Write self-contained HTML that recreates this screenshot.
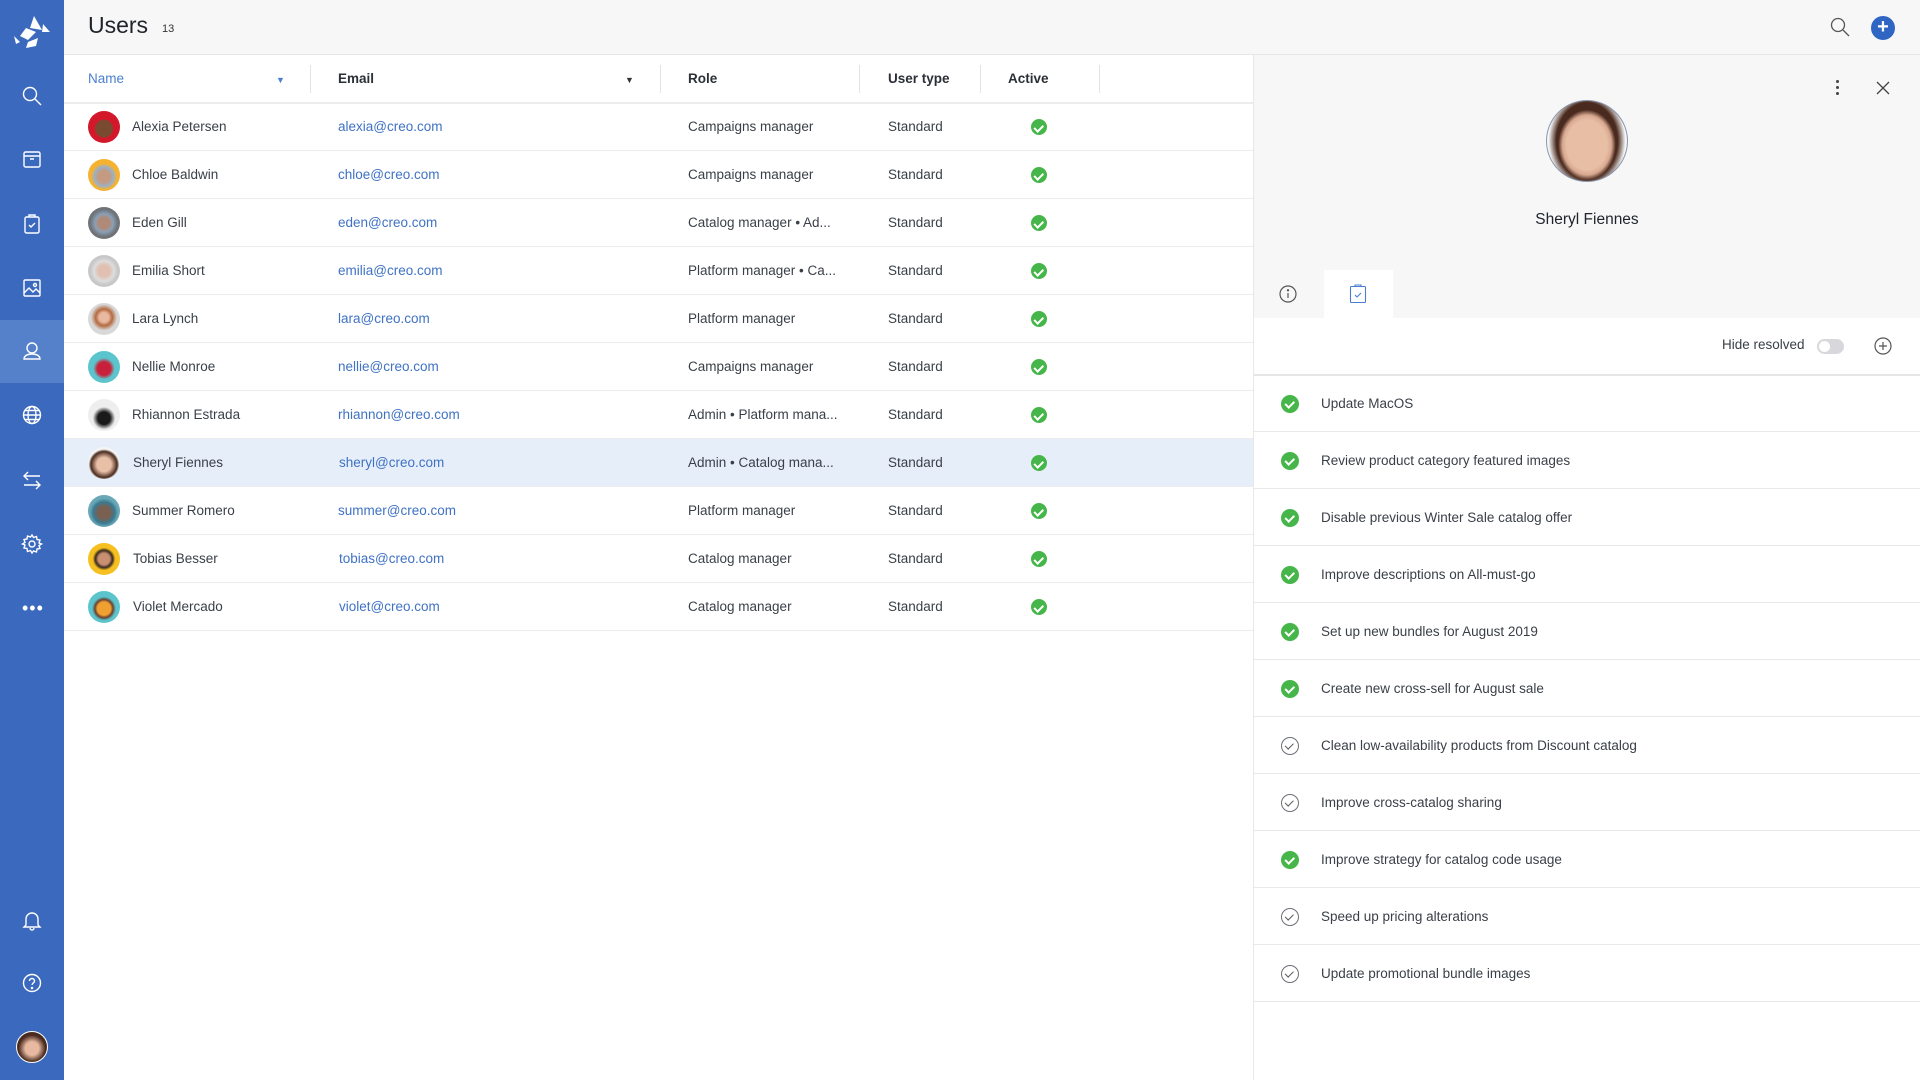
<!DOCTYPE html>
<html><head><meta charset="utf-8"><style>
*{margin:0;padding:0;box-sizing:border-box}
body{width:1920px;height:1080px;overflow:hidden;background:#fff;font-family:"Liberation Sans",sans-serif;color:#2e3440;position:relative}
.abs{position:absolute}
#side{left:0;top:0;width:64px;height:1080px;background:#3b69be}
.si{position:absolute;left:20px;width:24px;height:24px}
#top{left:64px;top:0;width:1856px;height:55px;background:#f7f7f7;border-bottom:1px solid #e6e6e6}
.hd{position:absolute;top:55px;height:48px;line-height:48px;font-size:13.5px;font-weight:bold;color:#2b2f36}
.sep{position:absolute;top:65px;width:1px;height:28px;background:#e3e3e3}
.row{position:absolute;left:64px;width:1189px;height:48px;border-bottom:1.5px solid #ececec;font-size:13.5px;color:#3a3f47}
.row.sel{background:#e6eef9}
.row span{position:absolute;top:0;line-height:48px;white-space:nowrap}
.av{position:absolute;left:24px;top:8px;width:32px;height:32px;border-radius:50%}
.em{color:#3f72c4}
.ok{position:absolute;left:967px;top:16px;width:16px;height:16px;border-radius:50%;background:#47b64a}
.ok:after,.tk.g:after{content:"";position:absolute;left:5px;top:3.5px;width:3.5px;height:6.5px;border:solid #fff;border-width:0 2px 2px 0;transform:rotate(45deg)}
#rp{left:1253px;top:55px;width:667px;height:1025px;background:#fff;border-left:1px solid #e8e8e8}
#rtop{left:1254px;top:55px;width:666px;height:263px;background:#f7f7f7}
.task{position:absolute;left:1254px;width:666px;height:57px;border-bottom:1.5px solid #e8e8e8;font-size:13.5px;color:#3a3f47}
.task span{position:absolute;left:67px;line-height:57px}
.tk{position:absolute;left:27px;top:20px;width:18px;height:18px;border-radius:50%}
.tk.g{background:#47b64a}
.tk.g:after{left:6px;top:4px}
.tk.o{border:1.3px solid #6b6f76}
.tk.o:after{content:"";position:absolute;left:5px;top:3px;width:3.5px;height:6.5px;border:solid #555;border-width:0 1.6px 1.6px 0;transform:rotate(45deg)}
</style></head><body>
<div id="side" class="abs">
<svg class="abs" style="left:12px;top:14px" width="40" height="36" viewBox="0 0 40 36"><g fill="#fff"><polygon points="22,2 30,16 18,14"/><polygon points="31,10 38,18 30,18"/><polygon points="14,14 24,18 16,26 8,22"/><polygon points="2,22 8,28 4,30"/><polygon points="16,28 26,24 24,32 14,34"/></g></svg>
<svg class="si" style="top:84px" viewBox="0 0 24 24" fill="none" stroke="#fff" stroke-width="1.4"><circle cx="10" cy="10" r="6.5"/><path d="M15 15l6 6"/></svg>
<svg class="si" style="top:147px" viewBox="0 0 24 24" fill="none" stroke="#fff" stroke-width="1.4"><rect x="4" y="5" width="16" height="15" rx="1.5"/><path d="M4 9h16M10 12h4"/></svg>
<svg class="si" style="top:212px" viewBox="0 0 24 24" fill="none" stroke="#fff" stroke-width="1.4"><rect x="5" y="5" width="14" height="16" rx="1.5"/><path d="M9 5V3h6v2M9 13l2 2 4-4"/></svg>
<svg class="si" style="top:276px" viewBox="0 0 24 24" fill="none" stroke="#fff" stroke-width="1.4"><rect x="4" y="4" width="16" height="16" rx="1"/><path d="M4 17l5-5 4 4 3-3 4 4"/><circle cx="15" cy="9" r="1.5"/></svg>
<div class="abs" style="left:0;top:320px;width:64px;height:63px;background:#5581cb"></div>
<svg class="si" style="top:339px" viewBox="0 0 24 24" fill="none" stroke="#fff" stroke-width="1.4"><circle cx="12" cy="9" r="5"/><path d="M4 20c0-3 3-5 8-5s8 2 8 5z"/></svg>
<svg class="si" style="top:403px" viewBox="0 0 24 24" fill="none" stroke="#fff" stroke-width="1.4"><circle cx="12" cy="12" r="8.5"/><ellipse cx="12" cy="12" rx="4" ry="8.5"/><path d="M3.5 12h17M5 7.5h14M5 16.5h14"/></svg>
<svg class="si" style="top:468px" viewBox="0 0 24 24" fill="none" stroke="#fff" stroke-width="1.4"><path d="M20 8H4M8 4L4 8l4 4M4 17h16M16 13l4 4-4 4"/></svg>
<svg class="si" style="top:532px" viewBox="0 0 24 24" fill="none" stroke="#fff" stroke-width="1.4"><circle cx="12" cy="12" r="3"/><path d="M12 3l1.5 2.5 3-1 .5 3 3 .5-1 3L21.5 12l-2.5 1.5 1 3-3 .5-.5 3-3-1L12 21l-1.5-2.5-3 1-.5-3-3-.5 1-3L2.5 12 5 10.5l-1-3 3-.5.5-3 3 1z"/></svg>
<div class="abs" style="left:22px;top:606px;color:#fff;font-size:18px;letter-spacing:1px;line-height:4px">•••</div>
<svg class="si" style="top:908px" viewBox="0 0 24 24" fill="none" stroke="#fff" stroke-width="1.4"><path d="M6 17V11a6 6 0 0112 0v6l2 2H4zM10 20a2 2 0 004 0"/></svg>
<svg class="si" style="top:971px" viewBox="0 0 24 24" fill="none" stroke="#fff" stroke-width="1.4"><circle cx="12" cy="12" r="8.5"/><path d="M9.5 10a2.5 2.5 0 115 0c0 2-2.5 2-2.5 4"/><circle cx="12" cy="17" r=".6" fill="#fff"/></svg>
<div class="abs" style="left:16px;top:1031px;width:32px;height:32px;border-radius:50%;background:radial-gradient(circle at 50% 55%,#e8b9a0 30%,#4a2b20 60%);border:1px solid #fff"></div>
</div>
<div id="top" class="abs">
<div class="abs" style="left:24px;top:12px;font-size:23px;color:#1f232a">Users</div>
<div class="abs" style="left:98px;top:23px;font-size:11px;color:#333">13</div>
<svg class="abs" style="left:1766px;top:17px" width="20" height="20" viewBox="0 0 20 20" fill="none" stroke="#555" stroke-width="1.3"><circle cx="8" cy="8" r="6.5"/><path d="M13 13l6 6"/></svg>
<div class="abs" style="left:1807px;top:16px;width:24px;height:24px;border-radius:50%;background:#2f66c4;color:#fff;font-size:20px;line-height:23px;text-align:center;font-weight:bold">+</div>
</div>
<div class="hd" style="left:88px;color:#4a7fd0;font-weight:normal">Name</div>
<div class="abs" style="left:276px;top:75px;font-size:9px;color:#4a7fd0">▼</div>
<div class="sep" style="left:310px"></div>
<div class="hd" style="left:338px">Email</div>
<div class="abs" style="left:625px;top:75px;font-size:9px;color:#333">▼</div>
<div class="sep" style="left:660px"></div>
<div class="hd" style="left:688px">Role</div>
<div class="sep" style="left:859px"></div>
<div class="hd" style="left:888px">User type</div>
<div class="sep" style="left:980px"></div>
<div class="hd" style="left:1008px">Active</div>
<div class="sep" style="left:1099px"></div>
<div class="abs" style="left:64px;top:102px;width:1189px;height:1.5px;background:#ececec"></div>

<div class="row" style="top:103px"><div class="av" style="background:radial-gradient(circle at 50% 55%,#7a4a30 35%,#d4182c 40%)"></div><span style="left:68px">Alexia Petersen</span><span class="em" style="left:274px">alexia@creo.com</span><span style="left:624px">Campaigns manager</span><span style="left:824px">Standard</span><div class="ok"></div></div>
<div class="row" style="top:151px"><div class="av" style="background:radial-gradient(circle at 50% 55%,#c49a80 25%,#9ab0c8 40%,#f5b230 55%)"></div><span style="left:68px">Chloe Baldwin</span><span class="em" style="left:274px">chloe@creo.com</span><span style="left:624px">Campaigns manager</span><span style="left:824px">Standard</span><div class="ok"></div></div>
<div class="row" style="top:199px"><div class="av" style="background:radial-gradient(circle at 50% 50%,#b08a78 25%,#8aa0b8 40%,#707478 60%)"></div><span style="left:68px">Eden Gill</span><span class="em" style="left:274px">eden@creo.com</span><span style="left:624px">Catalog manager • Ad...</span><span style="left:824px">Standard</span><div class="ok"></div></div>
<div class="row" style="top:247px"><div class="av" style="background:radial-gradient(circle at 50% 50%,#e0c0b0 25%,#ddd 45%,#c8c8c8 60%)"></div><span style="left:68px">Emilia Short</span><span class="em" style="left:274px">emilia@creo.com</span><span style="left:624px">Platform manager • Ca...</span><span style="left:824px">Standard</span><div class="ok"></div></div>
<div class="row" style="top:295px"><div class="av" style="background:radial-gradient(circle at 50% 45%,#e8b8a0 20%,#b46a40 35%,#d8d8d8 55%)"></div><span style="left:68px">Lara Lynch</span><span class="em" style="left:274px">lara@creo.com</span><span style="left:624px">Platform manager</span><span style="left:824px">Standard</span><div class="ok"></div></div>
<div class="row" style="top:343px"><div class="av" style="background:radial-gradient(circle at 50% 55%,#c8203a 28%,#5cc4cc 45%)"></div><span style="left:68px">Nellie Monroe</span><span class="em" style="left:274px">nellie@creo.com</span><span style="left:624px">Campaigns manager</span><span style="left:824px">Standard</span><div class="ok"></div></div>
<div class="row" style="top:391px"><div class="av" style="background:radial-gradient(circle at 50% 60%,#1a1a1a 25%,#eee 45%)"></div><span style="left:68px">Rhiannon Estrada</span><span class="em" style="left:274px">rhiannon@creo.com</span><span style="left:624px">Admin • Platform mana...</span><span style="left:824px">Standard</span><div class="ok"></div></div>
<div class="row sel" style="top:439px"><div class="av" style="background:radial-gradient(circle at 50% 55%,#e8c0a8 30%,#4a2b20 55%,#f5f5f5 65%)"></div><span style="left:69px">Sheryl Fiennes</span><span class="em" style="left:275px">sheryl@creo.com</span><span style="left:624px">Admin • Catalog mana...</span><span style="left:824px">Standard</span><div class="ok"></div></div>
<div class="row" style="top:487px"><div class="av" style="background:radial-gradient(circle at 50% 55%,#7a6050 25%,#3a7a90 45%,#6aa8b8 60%)"></div><span style="left:68px">Summer Romero</span><span class="em" style="left:274px">summer@creo.com</span><span style="left:624px">Platform manager</span><span style="left:824px">Standard</span><div class="ok"></div></div>
<div class="row" style="top:535px"><div class="av" style="background:radial-gradient(circle at 50% 50%,#c89070 25%,#3a2a20 38%,#f5c020 50%)"></div><span style="left:69px">Tobias Besser</span><span class="em" style="left:275px">tobias@creo.com</span><span style="left:624px">Catalog manager</span><span style="left:824px">Standard</span><div class="ok"></div></div>
<div class="row" style="top:583px"><div class="av" style="background:radial-gradient(circle at 50% 55%,#f0a030 28%,#6a4030 38%,#5cc4cc 50%)"></div><span style="left:69px">Violet Mercado</span><span class="em" style="left:275px">violet@creo.com</span><span style="left:624px">Catalog manager</span><span style="left:824px">Standard</span><div class="ok"></div></div>

<div id="rp" class="abs"></div>
<div id="rtop" class="abs"></div>
<div class="abs" style="left:1836px;top:80px;width:3px;height:3px;border-radius:50%;background:#444;box-shadow:0 6px #444,0 12px #444"></div>
<svg class="abs" style="left:1876px;top:81px" width="14" height="14" viewBox="0 0 14 14" stroke="#444" stroke-width="1.3"><path d="M1 1l12 12M13 1L1 13"/></svg>
<div class="abs" style="left:1546px;top:100px;width:82px;height:82px;border-radius:50%;border:1px solid #8a97b0;background:radial-gradient(ellipse 36% 44% at 50% 55%,#e8bfa5 70%,#d8a890 85%,transparent 100%),radial-gradient(ellipse 48% 60% at 50% 50%,#4a2a1e 80%,#f5f5f5 100%)"></div>
<div class="abs" style="left:1254px;top:211px;width:666px;text-align:center;font-size:15.5px;color:#1f232a">Sheryl Fiennes</div>
<svg class="abs" style="left:1279px;top:285px" width="18" height="18" viewBox="0 0 18 18" fill="none" stroke="#555" stroke-width="1.2"><circle cx="9" cy="9" r="8"/><path d="M9 8v5"/><circle cx="9" cy="5.3" r=".6" fill="#555"/></svg>
<div class="abs" style="left:1324px;top:270px;width:69px;height:49px;background:#fff"></div>
<svg class="abs" style="left:1349px;top:284px" width="18" height="20" viewBox="0 0 18 20" fill="none" stroke="#4a7fd0" stroke-width="1.1"><rect x="1.5" y="2.5" width="15" height="16" rx="1"/><path d="M6 2.5V1h6v1.5M6 11l2 2 4-4"/></svg>
<div class="abs" style="left:1722px;top:337px;font-size:13.5px;color:#3a3f47">Hide resolved</div>
<div class="abs" style="left:1817px;top:339px;width:27px;height:15px;border-radius:8px;background:#d8d8dc"><div style="position:absolute;left:2px;top:2px;width:11px;height:11px;border-radius:50%;background:#fff"></div></div>
<svg class="abs" style="left:1874px;top:337px" width="18" height="18" viewBox="0 0 18 18" fill="none" stroke="#555" stroke-width="1.2"><circle cx="9" cy="9" r="8"/><path d="M9 5v8M5 9h8"/></svg>
<div class="abs" style="left:1254px;top:374px;width:666px;height:1.5px;background:#e6e6e6"></div>

<div class="task" style="top:375px"><div class="tk g"></div><span>Update MacOS</span></div>
<div class="task" style="top:432px"><div class="tk g"></div><span>Review product category featured images</span></div>
<div class="task" style="top:489px"><div class="tk g"></div><span>Disable previous Winter Sale catalog offer</span></div>
<div class="task" style="top:546px"><div class="tk g"></div><span>Improve descriptions on All-must-go</span></div>
<div class="task" style="top:603px"><div class="tk g"></div><span>Set up new bundles for August 2019</span></div>
<div class="task" style="top:660px"><div class="tk g"></div><span>Create new cross-sell for August sale</span></div>
<div class="task" style="top:717px"><div class="tk o"></div><span>Clean low-availability products from Discount catalog</span></div>
<div class="task" style="top:774px"><div class="tk o"></div><span>Improve cross-catalog sharing</span></div>
<div class="task" style="top:831px"><div class="tk g"></div><span>Improve strategy for catalog code usage</span></div>
<div class="task" style="top:888px"><div class="tk o"></div><span>Speed up pricing alterations</span></div>
<div class="task" style="top:945px"><div class="tk o"></div><span>Update promotional bundle images</span></div>
</body></html>
